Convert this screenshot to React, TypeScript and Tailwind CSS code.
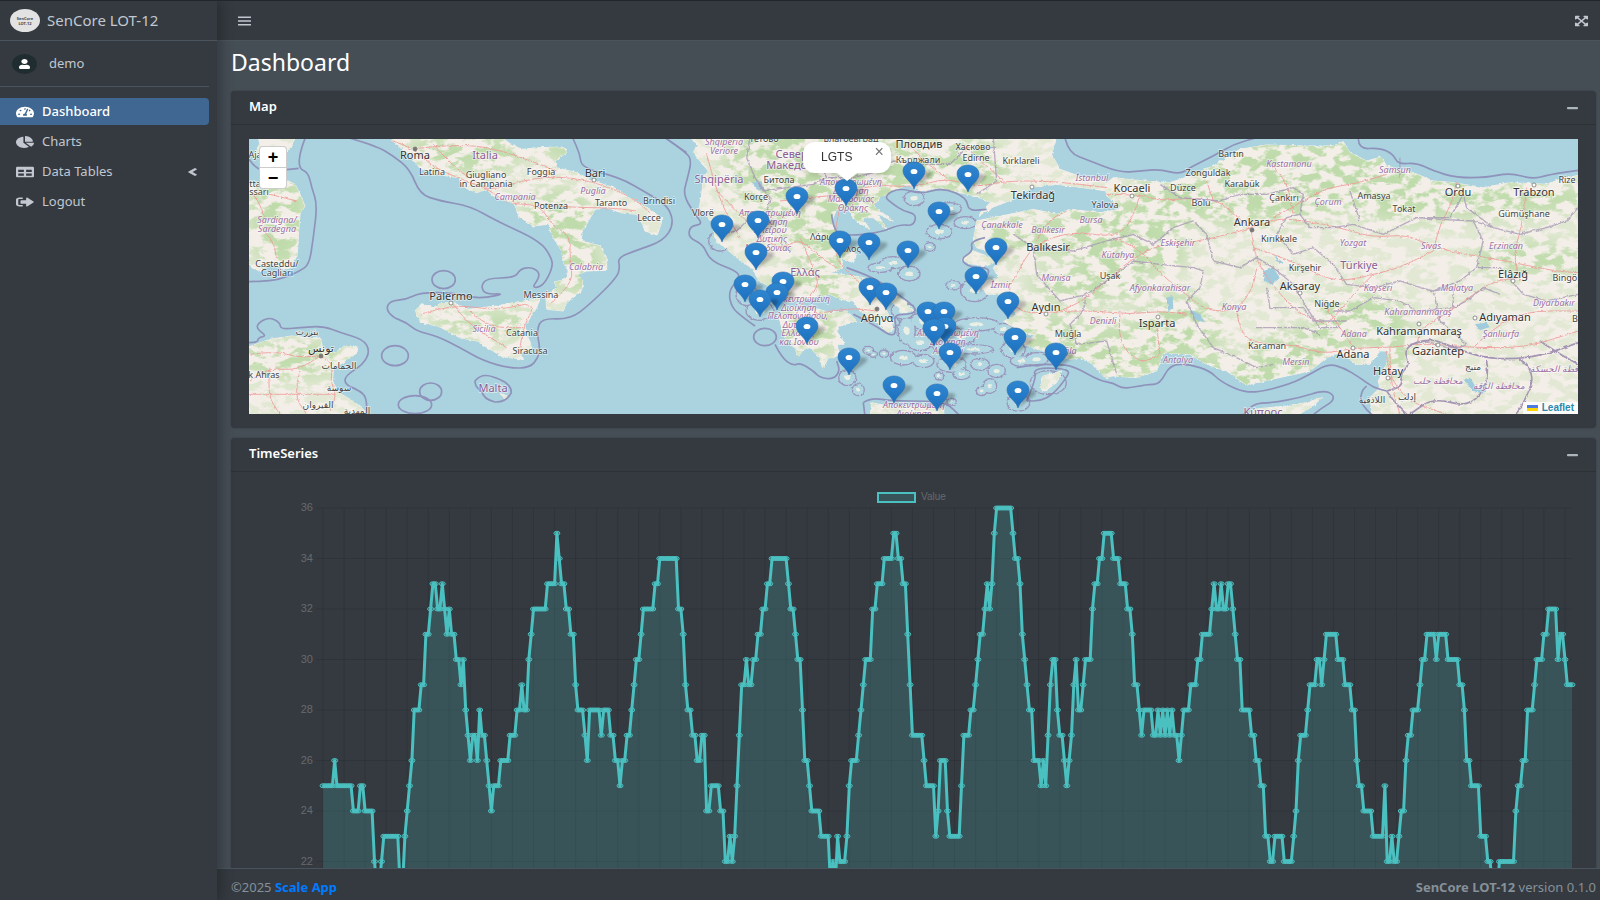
import { useState, type ReactNode } from "react";
import {
  FaBars,
  FaChartPie,
  FaChevronLeft,
  FaExpandArrowsAlt,
  FaMinus,
  FaSignOutAlt,
  FaTable,
  FaTachometerAlt,
  FaUser,
} from "react-icons/fa";

// [first sample, value], each value holds until the next entry
const RUNS: [number, number][] = [
  [0, 25], [5, 26], [6, 25], [13, 24], [16, 25], [18, 24], [22, 22], [23, 21], [25, 22], [26, 23],
  [33, 21], [35, 23], [36, 24], [37, 25], [38, 26], [39, 28], [42, 29], [44, 31], [46, 32], [47, 33],
  [49, 32], [51, 33], [52, 32], [53, 31], [54, 32], [55, 31], [57, 30], [59, 29], [60, 30], [61, 28],
  [62, 27], [63, 26], [64, 27], [66, 26], [67, 28], [68, 27], [70, 26], [71, 25], [72, 24], [73, 25],
  [76, 26], [80, 27], [83, 28], [85, 29], [86, 28], [88, 30], [89, 31], [90, 32], [96, 33], [100, 35],
  [101, 34], [102, 33], [104, 32], [106, 31], [108, 29], [109, 28], [112, 27], [113, 26], [114, 28],
  [119, 27], [120, 28], [123, 27], [125, 26], [127, 25], [128, 26], [130, 27], [132, 28], [133, 29],
  [134, 30], [136, 31], [137, 32], [142, 33], [144, 34], [152, 32], [154, 31], [155, 29], [156, 28],
  [158, 27], [160, 26], [162, 27], [164, 24], [166, 25], [170, 24], [172, 22], [174, 23], [175, 22],
  [176, 23], [177, 25], [178, 27], [179, 29], [181, 30], [182, 29], [184, 30], [186, 31], [188, 32],
  [190, 33], [192, 34], [199, 33], [200, 32], [202, 31], [203, 30], [205, 28], [206, 26], [208, 25],
  [209, 24], [213, 23], [217, 21], [218, 22], [219, 21], [220, 23], [221, 22], [224, 23], [225, 25],
  [226, 26], [229, 27], [230, 28], [231, 29], [232, 30], [235, 32], [237, 33], [240, 34], [244, 35],
  [246, 34], [248, 33], [250, 31], [251, 29], [252, 27], [257, 26], [258, 25], [262, 23], [263, 24],
  [264, 26], [267, 24], [268, 23], [273, 25], [274, 27], [277, 28], [279, 29], [280, 30], [281, 31],
  [283, 32], [284, 33], [285, 32], [286, 33], [287, 35], [288, 36], [295, 35], [296, 34], [298, 33],
  [299, 31], [300, 30], [301, 29], [302, 28], [304, 26], [307, 25], [308, 26], [309, 25], [310, 27],
  [311, 29], [312, 30], [314, 28], [315, 27], [317, 26], [318, 25], [319, 26], [320, 27], [321, 29],
  [322, 30], [323, 28], [325, 29], [326, 30], [329, 32], [330, 33], [332, 34], [334, 35], [338, 34],
  [341, 33], [344, 32], [346, 31], [347, 29], [349, 28], [350, 27], [351, 28], [355, 27], [357, 28],
  [358, 27], [359, 28], [360, 27], [361, 28], [362, 27], [363, 28], [364, 27], [366, 26], [367, 27],
  [368, 28], [371, 29], [374, 30], [376, 31], [380, 32], [381, 33], [382, 32], [384, 33], [385, 32],
  [387, 33], [389, 32], [390, 31], [391, 30], [393, 28], [397, 27], [399, 26], [401, 25], [403, 23],
  [405, 22], [407, 23], [411, 22], [415, 23], [416, 24], [417, 26], [418, 27], [421, 28], [422, 29],
  [425, 30], [427, 29], [428, 30], [429, 31], [434, 30], [437, 29], [440, 28], [442, 26], [443, 25],
  [445, 24], [449, 23], [454, 25], [455, 22], [457, 23], [458, 22], [460, 23], [461, 24], [463, 26],
  [464, 27], [466, 28], [469, 29], [470, 30], [472, 31], [476, 30], [477, 31], [481, 30], [486, 29],
  [488, 28], [489, 26], [491, 25], [495, 23], [498, 22], [500, 21], [503, 22], [510, 24], [511, 25],
  [513, 26], [515, 28], [518, 29], [519, 30], [522, 31], [524, 32], [528, 30], [529, 31], [531, 30],
  [532, 29],
];
const SAMPLES = 535;

const values = RUNS.flatMap(([start, value], i) =>
  Array<number>((RUNS[i + 1]?.[0] ?? SAMPLES) - start).fill(value)
);

// Marker tips on the map
const MARKERS: [number, number][] = [
  [665, 50], [719, 53], [597, 67], [548, 75], [690, 90], [509, 99], [473, 103], [591, 119],
  [620, 121], [747, 126], [659, 129], [507, 131], [727, 155], [534, 160], [496, 163], [621, 166],
  [637, 171], [528, 171], [511, 178], [759, 180], [679, 190], [695, 190], [696, 205], [558, 205],
  [685, 207], [766, 216], [807, 231], [701, 231], [600, 236], [645, 264], [769, 269], [688, 272],
];

type Label = [string, number, number];

const CITIES: Label[] = [
  ["Roma", 166, 17], ["Palermo", 202, 158], ["Bari", 346, 35], ["تونس", 72, 210],
  ["Tekirdağ", 784, 57], ["Kocaeli", 883, 50], ["Ankara", 1003, 84], ["Balıkesir", 799, 109],
  ["Aksaray", 1051, 148], ["Aydın", 797, 169], ["Αθήνα", 628, 180], ["Isparta", 908, 185],
  ["Ordu", 1209, 54], ["Trabzon", 1285, 54], ["Elâzığ", 1264, 136], ["Adıyaman", 1256, 179],
  ["Kahramanmaraş", 1170, 193], ["Gaziantep", 1189, 213], ["Adana", 1104, 216], ["Hatay", 1139, 233],
  ["Пловдив", 670, 6],
];

const TOWNS: Label[] = [
  ["Aja", 6, 16], ["tta", 6, 45], ["ssari", 10, 53], ["Latina", 183, 33], ["Giugliano", 237, 36],
  ["in Campania", 237, 45], ["Foggia", 292, 33], ["Potenza", 302, 67], ["Taranto", 362, 64],
  ["Brindisi", 410, 62], ["Lecce", 400, 79], ["Casteddu/", 28, 125], ["Cagliari", 28, 134],
  ["Messina", 292, 156], ["Catania", 273, 194], ["Siracusa", 281, 212], ["بنزرت", 58, 193],
  ["الحمامات", 90, 227], ["k Ahras", 15, 236], ["سوسة", 90, 249], ["القيروان", 69, 266],
  ["المهدية", 108, 272], ["Тетово", 515, 0], ["Битола", 530, 41], ["Korçe", 507, 58],
  ["Vlorë", 454, 74], ["Благоевград", 602, 0], ["Хасково", 724, 8], ["Кърджали", 669, 21],
  ["Edirne", 727, 19], ["Kırklareli", 772, 22], ["Λάρισα", 576, 98], ["Βόλος", 599, 110],
  ["Yalova", 856, 66], ["Uşak", 861, 137], ["Muğla", 819, 195], ["Bartın", 982, 15],
  ["Zonguldak", 959, 34], ["Karabük", 993, 45], ["Düzce", 934, 49], ["Bolu", 952, 64],
  ["Çankırı", 1035, 59], ["Amasya", 1125, 57], ["Tokat", 1155, 70], ["Rize", 1318, 41],
  ["Gümüşhane", 1275, 75], ["Kırıkkale", 1030, 100], ["Kırşehir", 1056, 129], ["Niğde", 1078, 165],
  ["Karaman", 1018, 207], ["Bingöl", 1317, 139], ["منبج", 1224, 228], ["إدلب", 1158, 258],
  ["اللاذقية", 1123, 261], ["B", 1326, 180],
];

const REGIONS: Label[] = [
  ["Sardigna/", 28, 81], ["Sardegna", 28, 90], ["Campania", 266, 58], ["Puglia", 344, 52],
  ["Calabria", 337, 128], ["Sicilia", 235, 190], ["Shqipëria", 475, 3], ["Veriore", 475, 12],
  ["Αποκεντρωμένη", 602, 43], ["Διοίκηση", 602, 52], ["Μακεδονίας", 602, 60], ["Θράκης", 604, 69],
  ["Αποκεντρωμένη", 521, 74], ["Διοίκηση", 521, 83], ["Ηπείρου", 521, 91], ["Δυτικής", 523, 100],
  ["Μακεδονίας", 519, 109], ["Αποκεντρωμένη", 550, 160], ["Διοίκηση", 550, 169],
  ["Πελοποννήσου,", 549, 177], ["Δυτικής", 549, 186], ["Ελλάδας", 549, 194],
  ["και Ιονίου", 550, 203], ["Αποκεντρωμένη", 699, 194], ["Διοίκηση", 699, 203],
  ["Αιγαίου", 699, 212], ["Αποκεντρωμένη", 665, 266], ["Διοίκηση", 665, 275],
  ["Çanakkale", 753, 86], ["Balıkesir", 799, 91], ["Bursa", 842, 81], ["İstanbul", 843, 39],
  ["Kütahya", 869, 116], ["Manisa", 807, 139], ["İzmir", 752, 146], ["Denizli", 854, 182],
  ["Muğla", 815, 212], ["Kastamonu", 1040, 25], ["Samsun", 1146, 31], ["Çorum", 1079, 63],
  ["Eskişehir", 929, 104], ["Yozgat", 1104, 104], ["Sivas", 1182, 107], ["Erzincan", 1257, 107],
  ["Afyonkarahisar", 911, 149], ["Kayseri", 1129, 149], ["Malatya", 1208, 149], ["Konya", 985, 168],
  ["Kahramanmaraş", 1169, 173], ["Diyarbakır", 1305, 164], ["Adana", 1105, 195],
  ["Şanlıurfa", 1252, 195], ["Mersin", 1047, 223], ["Antalya", 929, 221],
  ["محافظة حلب", 1189, 242], ["محافظة الرقة", 1250, 247], ["محافظة الحسكة", 1312, 230],
];

const COUNTRIES: Label[] = [
  ["Italia", 236, 17], ["Malta", 244, 250], ["Shqipëria", 470, 41], ["Северна", 549, 16],
  ["Македонија", 549, 27], ["Ελλάς", 556, 134], ["Türkiye", 1110, 127], ["Κύπρος", 1014, 274],
];

// Small islands with their coastal waters: x, y, rx, ry
const ISLANDS: [number, number, number, number][] = [
  [898, 452, 38, 22], [930, 383, 34, 18], [976, 425, 34, 18], [870, 498, 16, 13], [822, 352, 30, 22],
  [760, 545, 40, 18], [720, 560, 36, 14], [808, 578, 32, 22], [940, 613, 22, 14], [1004, 628, 42, 34],
  [790, 690, 36, 24], [850, 720, 38, 26], [905, 745, 40, 30], [800, 750, 26, 40], [840, 785, 36, 24],
  [915, 790, 40, 26], [965, 765, 44, 24], [790, 830, 38, 22], [850, 840, 32, 20], [935, 850, 44, 24],
  [1000, 805, 60, 14], [1010, 730, 66, 20], [1020, 850, 28, 18], [1070, 870, 26, 20],
  [1120, 805, 36, 26], [1145, 840, 34, 16], [1190, 835, 34, 20], [1025, 930, 16, 14],
  [1050, 915, 20, 22], [1135, 965, 34, 26], [965, 880, 26, 16], [897, 885, 14, 12],
  [685, 808, 16, 12], [732, 818, 14, 11], [700, 820, 12, 9], [622, 890, 26, 24], [655, 926, 18, 18],
  [360, 690, 42, 28], [320, 640, 32, 34], [240, 480, 34, 30], [935, 962, 14, 10],
  [1090, 745, 28, 18], [755, 725, 24, 14], [880, 975, 12, 10], [1225, 905, 54, 36],
];

// The west sheet covers Italy and Tunisia, the east sheet the Balkans and Anatolia
const WEST = "translate(-29 -58) scale(0.3333)";
const EAST = "translate(391 -58) scale(0.3333)";

const WEST_LAND =
  "M87 300L120 325L180 318L205 300L225 310L240 340L255 375L240 400L236 450L232 520L215 560L190 565L150 545L120 570L95 560L87 540Z" +
  "M120 165L228 165L212 200L200 215L140 197L118 215L100 232L116 195Z" +
  "M505 165L530 190L580 235L600 262L650 280L715 290L735 320L770 335L800 325L820 345L850 355L885 370L895 405L940 435L985 430L1000 470L1025 510L1030 545L1045 570L1040 595L1003 603L1010 620L990 635L978 650L980 685L1030 690L1040 665L1085 630L1088 600L1075 580L1100 570L1160 568L1160 530L1140 495L1090 482L1082 460L1100 430L1125 385L1160 378L1200 395L1250 400L1268 430L1275 450L1312 462L1328 415L1290 385L1240 355L1180 320L1120 300L1070 275L1010 260L1005 240L1040 215L1030 198L960 200L905 205L870 188L840 165Z" +
  "M585 690L605 668L640 680L665 665L700 665L745 685L830 675L880 665L960 652L950 680L915 735L925 770L935 800L905 815L910 835L850 828L810 805L770 780L720 770L660 738L600 722Z" +
  "M80 800L150 775L215 765L265 770L300 770L310 805L345 815L375 795L410 795L412 815L370 845L340 860L338 900L355 935L400 960L430 985L450 1010L80 1010Z" +
  "M842 938L862 946L856 956Z";

const EAST_LAND =
  "M145 165L172 190L160 215L180 240L205 270L190 290L185 340L178 380L190 395L215 420L225 470L255 500L290 530L340 565L355 600L400 620L400 640L460 660L520 650L570 640L600 655L640 660L660 690L700 715L745 755L760 745L745 700L725 660L690 610L660 590L640 585L570 575L610 560L600 530L640 545L650 520L620 495L590 460L575 420L590 385L620 380L650 420L690 445L665 410L700 410L745 450L710 398L760 420L700 375L720 350L760 330L800 312L850 330L900 320L960 335L1010 345L1050 365L1015 405L1060 378L1120 355L1180 318L1250 310L1330 320L1400 330L1395 295L1330 290L1260 265L1235 220L1250 165Z" +
  "M415 700L440 680L520 680L570 695L620 690L650 720L600 735L590 750L615 790L590 790L600 820L580 830L565 830L548 865L540 830L510 800L490 805L475 828L465 800L440 785L425 740Z" +
  "M650 585L700 600L760 640L800 665L820 690L790 690L740 650L680 620Z" +
  "M1010 420L1060 410L1110 400L1180 385L1250 400L1290 385L1380 395L1440 385L1420 360L1400 345L1395 310L1420 290L1510 300L1590 305L1650 285L1720 255L1800 205L1880 192L2000 195L2080 195L2110 182L2130 215L2180 240L2225 228L2240 255L2320 275L2380 300L2440 305L2530 320L2610 305L2720 310L2760 295L2830 280L2830 1010L2200 1010L2190 950L2220 920L2215 900L2240 850L2245 810L2220 810L2190 850L2150 850L2100 815L2060 830L2010 870L1940 885L1820 912L1760 870L1700 850L1650 820L1570 815L1550 870L1490 890L1420 885L1395 890L1360 850L1320 830L1290 835L1240 820L1180 800L1130 780L1190 765L1130 745L1090 720L1130 700L1100 660L1085 640L1040 640L1020 605L1075 590L1060 560L1075 545L1040 540L1075 520L1010 500L1000 480Z" +
  "M965 535L1000 510L1040 525L1070 540L1040 555L990 548Z" +
  "M690 1010L695 965L740 975L830 975L910 985L915 1010Z" +
  "M1200 920L1210 885L1265 870L1250 905L1215 930Z" +
  "M1820 1010L1840 985L1940 975L2000 965L2045 950L2020 975L1960 1010Z";

const WEST_WATERS =
  "M258 165L240 210L236 262L265 275L275 320L292 370L280 470L268 550L240 570L195 590L150 600L87 602M87 235L110 270L180 268L236 262" +
  "M385 170L470 195L520 225L570 265L600 340L660 360L750 375L830 420L960 480L995 530L998 560L970 615L935 622L958 590L955 570L930 558L900 565L885 590L800 592L783 615L795 640L855 638L800 650L755 650L700 635L600 635L560 655L510 660L498 685L520 710L560 725L590 750L650 765L720 800L790 840L870 862L930 860L955 830L960 800L950 750L965 712L1050 715L1110 670L1190 590L1200 560L1193 530L1250 508L1330 480L1362 430L1345 375L1280 335L1200 290L1085 260L1080 220L1058 170" +
  "M1335 170L1400 215" +
  "M87 785L112 785L115 770L140 765L112 745L112 728L147 708L180 725L182 745L240 740L310 735L360 755L430 775L450 810L430 850L375 885L375 910L420 930L440 950L440 1010";

const EAST_WATERS =
  "M75 170L140 215L155 240L140 300L130 340L160 395L190 430L150 435L145 470L190 490L210 540L290 570L300 590L265 630L275 680L310 710L345 735M405 790L425 830L460 855L480 845L520 870L540 890L580 895L600 870L590 840" +
  "M575 400L580 450L620 465L720 455L780 430L820 435L830 400L790 390L760 370L730 345L780 320L840 340L910 320L980 350L985 390L1040 385M1035 470L990 480L1000 510L960 535L990 560L1050 560L1040 590M640 700L700 730L760 770L770 740L760 700L820 700L830 680L760 630L700 590L620 560M670 965L690 950L760 960L860 960L920 965L960 1005M675 1005L670 965" +
  "M1275 170L1285 215L1350 240L1440 275L1500 270L1560 265L1620 280L1650 260L1720 225L1780 190L1850 170M2155 170L2155 205L2220 200L2260 220L2275 250L2330 245L2380 270L2450 290L2540 290L2610 275L2680 295L2730 280L2815 268" +
  "M1130 860L1190 850L1250 850L1300 855L1380 900L1420 905L1450 925L1520 910L1560 910L1590 850L1650 850L1710 870L1740 900L1800 930L1850 935L1950 910L2010 880L2065 848L2110 860L2160 890L2200 920L2240 930M2200 1005L2160 970L2165 930L2180 915" +
  "M1805 1010L1830 968L1900 965L1980 950L2050 928L2080 940L2080 960L2040 985L2010 1010M1160 960L1190 890L1180 870L1210 860L1290 865L1280 890L1240 940L1200 960L1160 960";

const BORDERS =
  "M330 170L320 230L345 290L370 330L440 320L520 310L560 290L640 290M345 290L390 350L380 400L330 410L290 450L240 460M640 290L720 270L760 240L850 250L930 250L980 200L1070 200M1060 170L1070 300L1010 340M560 170L540 250L560 290" +
  "M1120 460L1180 500L1300 510L1400 480L1480 460L1540 490L1600 440L1660 420L1700 460L1720 540L1800 560L1850 530L1900 560L1960 610L2000 680L2040 740L2100 740M1180 500L1190 580L1260 660L1340 640L1400 600L1480 540L1560 550L1660 560L1690 570L1680 620L1640 660L1670 730L1720 800L1790 830L1850 860L1900 850M1340 640L1330 690L1290 730L1310 790L1400 780L1430 880" +
  "M1560 310L1620 350L1740 360L1800 340L1880 340L1960 320L1990 340L1980 400L2010 440L2080 440L2140 430L2230 460L2330 410L2400 415L2500 420L2560 440L2640 460L2720 440L2780 420L2815 380M1980 400L1940 410L1910 460L1960 520L2020 500L2080 550L2120 610L2200 620L2280 600L2340 620L2380 630L2460 600L2510 560L2530 480L2500 420M2080 690L2130 690L2200 650L2280 660L2330 690L2440 680L2440 620L2380 630L2400 720L2480 790L2460 800M2280 230L2280 290M2130 330L2160 420M2330 410L2430 410L2470 340L2480 380L2560 440" +
  "M1880 620L1890 680L1990 680L2020 720L2120 720M1850 740L1990 740L2040 760M2510 560L2580 560L2650 640L2720 660L2815 640M2580 640L2530 620L2480 660L2440 680M2310 790L2360 780L2420 800L2460 800";

const STATE_BORDER =
  "M2240 930L2290 920L2280 880L2310 850L2290 800L2370 770L2440 800L2530 830L2620 835L2720 820L2815 785M2240 930L2260 960L2310 1010M2540 840L2550 900L2490 980L2380 950L2310 1000M2640 835L2690 870L2650 970L2620 1010M2700 780L2760 820L2815 850";

const EAST_ROADS =
  "M200 220L230 330L260 400L300 470M230 330L300 400L360 460L420 510L480 470L540 530L590 560M420 360L500 350L620 340L700 310L820 320L920 290L1010 320L1090 300L1240 300L1400 320" +
  "M600 380L580 460L590 540L640 590L700 640M480 470L520 560L540 620L470 680L460 760M520 700L620 680L710 690M640 170L650 240L620 340M800 180L850 240L920 290M980 200L1090 300" +
  "M1400 340L1500 340L1560 360L1650 350L1740 360L1780 400L1835 440L1840 500L1860 560L1920 640L1980 700L2060 730M1500 340L1480 420L1420 470L1300 450L1180 490L1130 580L1100 630L1140 700L1260 690L1380 690L1470 700L1560 690L1640 700M1420 470L1500 500L1560 580L1640 640L1700 690L1790 690L1840 620L1850 560" +
  "M1835 440L1700 480L1560 490L1480 530L1410 590L1330 660L1260 690M1835 440L1900 410L2000 420L2100 440L2200 470L2300 460L2380 500L2480 520L2600 540L2740 570L2815 575M1900 410L1990 360L2060 320L2140 310L2240 280M1840 500L1960 540L2050 590L2120 600L2200 580L2280 560L2380 510" +
  "M1790 690L1800 760L1860 790L1960 790L2050 820L2140 800L2250 800L2330 790L2390 790L2500 800L2660 800L2815 750M2060 730L2100 690L2140 640L2200 580M2140 800L2100 740L2060 680M2330 790L2340 740L2420 700L2500 640L2560 600L2640 590M2250 800L2250 900L2280 1000M1550 730L1560 820M2660 320L2650 420L2620 520L2640 600M2450 300L2440 360L2400 430L2380 510M1720 360L1700 300M1880 240L1940 290L1960 400M2240 810L2240 870L2300 960L2420 1000M2500 800L2560 740L2660 690L2815 690M1190 480L1220 420L1280 390M1440 700L1430 780L1500 850L1560 820";

const WEST_ROADS =
  "M520 180L585 203L640 260L740 300L810 330L900 300L1000 285L1120 300L1240 350L1290 395M585 203L700 190L820 200L960 250L1010 270M640 190L700 260L810 330L870 370L960 370L1000 440L1050 460L1050 540L1060 600L990 670M960 370L1060 380L1170 380L1250 390M600 700L700 668L830 690L950 660L910 740L900 800M750 690L800 740L910 740M700 668L730 720L860 800" +
  "M100 340L140 400L120 440L160 480L170 535M150 340L230 360M90 820L160 810L240 830L303 823L340 850L330 900L350 940L330 990M303 823L240 870L150 860L90 900M240 870L220 940L260 1000M150 860L140 940L180 1000M87 940L140 940L220 940L350 940";

const HEAVY_WOODS: [number, number, number, number][] = [
  [350, 8, 60, 18], [535, 30, 60, 50], [580, 70, 55, 60], [640, 30, 60, 30], [720, 30, 40, 30],
  [560, 150, 40, 25], [560, 195, 30, 25], [790, 95, 60, 22], [880, 80, 70, 20], [840, 145, 60, 18],
  [870, 215, 55, 30], [930, 190, 45, 35], [985, 240, 70, 22], [1050, 215, 45, 24], [1110, 180, 50, 28],
  [1000, 55, 120, 30], [1040, 15, 90, 18], [1140, 40, 80, 26], [1230, 60, 120, 18], [1280, 120, 60, 16],
  [1160, 65, 60, 18], [1148, 215, 14, 26], [880, 115, 60, 20], [310, 90, 40, 40], [325, 130, 30, 24],
  [215, 15, 60, 20], [30, 80, 30, 50], [40, 220, 60, 18], [240, 185, 60, 12], [800, 195, 40, 20],
];

// Rounds the corners of "M..L.." polylines with quadratic curves through the midpoints
function smooth(d: string) {
  return d
    .split("M")
    .filter(Boolean)
    .map((part) => {
      const pts = part.split("L").map((p) => p.split(" ").map(Number));
      const last = pts[pts.length - 1];
      let out = `M${pts[0][0]} ${pts[0][1]}`;
      for (let i = 1; i < pts.length - 1; i++) {
        const [x, y] = pts[i];
        const [nx, ny] = pts[i + 1];
        out += `Q${x} ${y} ${(x + nx) / 2} ${(y + ny) / 2}`;
      }
      return `${out}L${last[0]} ${last[1]}`;
    })
    .join("");
}

function LabelSet({ labels, className }: { labels: Label[]; className: string }) {
  return (
    <g className={className} textAnchor="middle">
      {labels.map(([text, x, y], i) => (
        <text key={i} x={x} y={y + 3}>
          {text}
        </text>
      ))}
    </g>
  );
}

function Marker({ x, y }: { x: number; y: number }) {
  return (
    <g transform={`translate(${x} ${y})`}>
      <path d="M0 0L16 -12Q22 -18 12 -18Q6 -18 0 0" fill="#000" opacity="0.25" filter="url(#soft)" />
      <path
        d="M0 0C-2 -7 -11 -11 -11 -18C-11 -23.500 -6 -27 0 -27S11 -23.500 11 -18C11 -11 2 -7 0 0Z"
        fill="url(#pin)"
        stroke="#2c6fae"
        strokeWidth="0.6"
      />
      <ellipse cx="0" cy="-17.500" rx="3.400" ry="2.600" fill="#fff" />
    </g>
  );
}

function StationMap() {
  const [popupOpen, setPopupOpen] = useState(true);

  return (
    <div className="relative h-[275px] w-full overflow-hidden bg-[#aad3df]">
      <svg viewBox="0 0 1329 275" preserveAspectRatio="xMidYMid slice" className="block h-full w-full" role="img" aria-label="Station map">
        <defs>
          <linearGradient id="pin" x1="0" y1="0" x2="0" y2="1">
            <stop offset="0" stopColor="#2f86cf" />
            <stop offset="1" stopColor="#1c70c0" />
          </linearGradient>
          <filter id="soft" x="-50%" y="-50%" width="200%" height="200%">
            <feGaussianBlur stdDeviation="1.5" />
          </filter>
          <filter id="halo" x="-50%" y="-50%" width="200%" height="200%">
            <feGaussianBlur stdDeviation="9" />
          </filter>
          {/* Roughens coasts, borders and roads */}
          <filter id="rough" filterUnits="userSpaceOnUse" x="0" y="0" width="4300" height="1100">
            <feTurbulence type="fractalNoise" baseFrequency="0.09" numOctaves="3" seed="4" />
            <feDisplacementMap in="SourceGraphic" scale="9" xChannelSelector="R" yChannelSelector="G" />
          </filter>
          <filter id="woods" filterUnits="userSpaceOnUse" x="0" y="0" width="1329" height="275" colorInterpolationFilters="sRGB">
            <feTurbulence type="fractalNoise" baseFrequency="0.07 0.11" numOctaves="4" seed="11" />
            <feColorMatrix values="0 0 0 0 0.75  0 0 0 0 0.86  0 0 0 0 0.67  7 0 0 0 -3.1" />
          </filter>
          <clipPath id="land">
            <path d={WEST_LAND} transform={WEST} />
            <path d={EAST_LAND} transform={EAST} />
          </clipPath>
          <mask id="wooded">
            <rect width="1329" height="275" fill="#555" />
            <g filter="url(#halo)" fill="#fff">
              {HEAVY_WOODS.map(([x, y, rx, ry], i) => (
                <ellipse key={i} cx={x} cy={y} rx={rx} ry={ry} />
              ))}
            </g>
          </mask>
        </defs>

        {/* Coastal waters of the islands, merged into one outline */}
        <g transform={EAST} filter="url(#rough)">
          <g fill="#9a95bb">
            {ISLANDS.map(([x, y, rx, ry], i) => (
              <ellipse key={i} cx={x} cy={y} rx={rx + 2} ry={ry + 2} />
            ))}
          </g>
          <g fill="#b0d6e1">
            {ISLANDS.map(([x, y, rx, ry], i) => (
              <ellipse key={i} cx={x} cy={y} rx={rx - 2} ry={ry - 2} />
            ))}
          </g>
          <g fill="#e9efe4">
            {ISLANDS.map(([x, y, rx, ry], i) => (
              <ellipse key={i} cx={x} cy={y} rx={rx * 0.35} ry={ry * 0.3} />
            ))}
          </g>
        </g>

        <g fill="#f3efe8" stroke="#f3efe8" strokeWidth="3" filter="url(#rough)" transform={WEST}>
          <path d={WEST_LAND} />
        </g>
        <g fill="#f3efe8" stroke="#f3efe8" strokeWidth="3" filter="url(#rough)" transform={EAST}>
          <path d={EAST_LAND} />
        </g>
        <g clipPath="url(#land)">
          <g mask="url(#wooded)">
            <rect width="1329" height="275" filter="url(#woods)" />
          </g>
        </g>

        {/* Lakes */}
        <g transform={EAST} fill="#9fcbdc" filter="url(#rough)">
          <path d="M1870 570L1900 560L1920 590L1895 612L1875 600Z" />
          <path d="M1650 685L1680 700L1695 725L1665 715ZM1580 650L1598 645L1600 680L1585 690Z" />
          <path d="M2470 895L2490 890L2510 920L2540 925L2530 938L2500 930ZM2505 730L2540 725L2550 738L2520 748Z" />
          <path d="M335 305L365 300L370 330L350 325ZM1900 520L1930 545L1920 550Z" />
        </g>

        {/* Roads */}
        <g fill="none" stroke="#f09a9a" strokeWidth="3" strokeOpacity="0.85">
          <path d={smooth(WEST_ROADS)} transform={WEST} filter="url(#rough)" />
          <path d={smooth(EAST_ROADS)} transform={EAST} filter="url(#rough)" />
        </g>

        {/* Borders and territorial waters */}
        <g fill="none" stroke="#a595b4" strokeLinejoin="round">
          <path d={BORDERS} transform={EAST} filter="url(#rough)" strokeWidth="4" strokeOpacity="0.75" />
          <path d={smooth(STATE_BORDER)} transform={EAST} filter="url(#rough)" strokeWidth="5" />
          <path d={smooth(EAST_WATERS)} transform={EAST} strokeWidth="5" stroke="#8f92ba" />
          <g transform={WEST} strokeWidth="5" stroke="#8f92ba">
            <path d={smooth(WEST_WATERS)} />
            <ellipse cx="671" cy="596" rx="35" ry="27" />
            <ellipse cx="525" cy="824" rx="40" ry="30" />
            <ellipse cx="632" cy="932" rx="33" ry="26" />
            <ellipse cx="585" cy="971" rx="50" ry="27" />
            <path d="M765 900Q785 875 820 888Q875 905 874 935Q860 965 825 963Q790 955 785 930Q765 920 765 900Z" />
          </g>
          <ellipse cx="375" cy="768" rx="34" ry="26" transform={EAST} strokeWidth="5" stroke="#8f92ba" />
        </g>

        {/* City dots */}
        <g fill="#fff" stroke="#777" strokeWidth="0.8">
          <circle cx="202" cy="164" r="2" />
          <circle cx="345" cy="41" r="2" />
          <circle cx="783" cy="48" r="2" />
          <circle cx="883" cy="57" r="2" />
          <circle cx="1209" cy="47" r="2" />
          <circle cx="1285" cy="46" r="2" />
          <circle cx="909" cy="178" r="2" />
          <circle cx="797" cy="175" r="2" />
          <circle cx="1051" cy="154" r="2" />
          <circle cx="1264" cy="142" r="2" />
          <circle cx="1226" cy="179" r="2" />
          <circle cx="1170" cy="185" r="2" />
          <circle cx="1189" cy="206" r="2" />
          <circle cx="1104" cy="209" r="2" />
          <circle cx="1139" cy="239" r="2" />
          <g fill="#777">
            <circle cx="166" cy="10" r="2" />
            <circle cx="1003" cy="91" r="2" />
            <circle cx="628" cy="170" r="2" />
            <circle cx="72" cy="217" r="2" />
          </g>
        </g>

        <g className="font-['Noto_Sans','DejaVu_Sans',sans-serif] [paint-order:stroke]" stroke="#ffffff" strokeOpacity="0.6" strokeWidth="1.5">
          <LabelSet labels={REGIONS} className="fill-[#9a6fa5] text-[9px] italic" />
          <LabelSet labels={TOWNS} className="fill-[#444444] text-[9px]" />
          <LabelSet labels={COUNTRIES} className="fill-[#8a5c96] text-[11px]" />
          <LabelSet labels={CITIES} className="fill-[#333333] text-[11px]" />
        </g>

        {MARKERS.map(([x, y]) => (
          <Marker key={`${x}-${y}`} x={x} y={y} />
        ))}
      </svg>

      {/* Zoom control */}
      <div className="absolute left-[10px] top-[7px] flex w-7 flex-col overflow-hidden rounded-sm border border-black/20 bg-white font-['Liberation_Sans',sans-serif] text-lg font-bold leading-5 text-black">
        <button type="button" aria-label="Zoom in" className="h-[21px] border-b border-[#cccccc]">
          +
        </button>
        <button type="button" aria-label="Zoom out" className="h-5">
          −
        </button>
      </div>

      {popupOpen && (
        <div className="absolute left-[45%] top-[3px] w-[88px] -translate-x-1/2 font-['Liberation_Sans',sans-serif] drop-shadow-md">
          <div className="relative flex h-[31px] items-center rounded-xl bg-white pb-0.5 pl-[18px] text-xs text-[#333333]">
            LGTS
            <button
              type="button"
              aria-label="Close popup"
              onClick={() => setPopupOpen(false)}
              className="absolute right-1 top-0.5 h-4 w-4 text-base leading-4 text-[#757575]"
            >
              ×
            </button>
          </div>
          <div className="mx-auto h-2 w-5 bg-white [clip-path:polygon(0_0,100%_0,50%_100%)]" />
        </div>
      )}

      <div className="absolute bottom-0 right-0 flex items-center gap-1 bg-white/80 px-1 font-['Liberation_Sans',sans-serif] text-[10px] leading-3">
        <svg viewBox="0 0 12 8" preserveAspectRatio="none" className="h-[6px] w-[11px]" aria-hidden="true">
          <path fill="#4c7be1" d="M0 0h12v4H0z" />
          <path fill="#ffd500" d="M0 4h12v4H0z" />
        </svg>
        <a href="#leaflet" className="font-bold text-[#2a88ad]">
          Leaflet
        </a>
      </div>
    </div>
  );
}

const PLOT_LEFT = 74;
const PLOT_WIDTH = 1249;
const PLOT_TOP = 22;
const PLOT_BOTTOM = 426;

const sampleX = (i: number) => PLOT_LEFT + (i * PLOT_WIDTH) / (SAMPLES - 1);
const valueY = (v: number) => PLOT_TOP + ((36 - v) * (PLOT_BOTTOM - PLOT_TOP)) / 16;

function TimeSeriesChart() {
  const points = values.map((v, i) => `${sampleX(i).toFixed(1)},${valueY(v).toFixed(1)}`);
  const line = `M${points.join("L")}`;
  const area = `${line}L${PLOT_LEFT + PLOT_WIDTH},${PLOT_BOTTOM}L${PLOT_LEFT},${PLOT_BOTTOM}Z`;
  const rows = [36, 34, 32, 30, 28, 26, 24, 22, 20];
  const columns = Array.from({ length: 60 }, (_, i) => i * 9);

  return (
    <svg viewBox="0 0 1329 450" className="block w-full font-['Liberation_Sans',sans-serif]" role="img" aria-label="Value over time">
      <g stroke="#000" strokeOpacity="0.1">
        {rows.map((v) => (
          <line key={v} x1={PLOT_LEFT - 7} x2={PLOT_LEFT + PLOT_WIDTH} y1={valueY(v)} y2={valueY(v)} />
        ))}
        {columns.map((i) => (
          <line key={i} x1={sampleX(i)} x2={sampleX(i)} y1={PLOT_TOP} y2={PLOT_BOTTOM + 5} />
        ))}
      </g>
      <g className="fill-[#666a6e] text-[11px]" textAnchor="end">
        {rows.map((v) => (
          <text key={v} x={PLOT_LEFT - 10} y={valueY(v) + 3}>
            {v}
          </text>
        ))}
      </g>

      <path d={area} fill="#4bc0c0" fillOpacity="0.2" />
      <path d={line} fill="none" stroke="#4bc0c0" strokeWidth="3" strokeLinejoin="round" />
      <g fill="#4bc0c0" fillOpacity="0.3" stroke="#4bc0c0" strokeWidth="1">
        {values.map((v, i) => (
          <ellipse key={i} cx={sampleX(i)} cy={valueY(v)} rx="3" ry="2" />
        ))}
      </g>

      {/* Legend */}
      <rect x="629" y="7" width="37" height="9" fill="#4bc0c0" fillOpacity="0.2" stroke="#4bc0c0" strokeWidth="2" />
      <text x="672" y="14" className="fill-[#666a6e] text-[10px]">
        Value
      </text>
    </svg>
  );
}

function Card({ title, children }: { title: string; children: ReactNode }) {
  const [isOpen, setIsOpen] = useState(true);

  return (
    <section className="rounded bg-[#343a40] shadow-[0_0_2px_rgba(0,0,0,0.25)]">
      <div className="flex h-[34px] items-center justify-between border-b border-black/15 px-[18px]">
        <h2 className="pb-0.5 text-[13px] font-semibold text-white">{title}</h2>
        <button type="button" aria-label={`Collapse ${title}`} onClick={() => setIsOpen(!isOpen)} className="text-[#adb5bd]">
          <FaMinus preserveAspectRatio="none" className="h-3 w-[11px]" />
        </button>
      </div>
      {isOpen && <div className="px-[18px] py-[14px]">{children}</div>}
    </section>
  );
}

const MENU = [
  { name: "Dashboard", icon: FaTachometerAlt },
  { name: "Charts", icon: FaChartPie },
  { name: "Data Tables", icon: FaTable, nested: true },
  { name: "Logout", icon: FaSignOutAlt },
];

function Sidebar() {
  return (
    <aside className="z-10 w-[217px] shrink-0 bg-[#343a40] text-[#c2c7d0] shadow-[4px_0_12px_rgba(0,0,0,0.25)]">
      {/* Brand */}
      <a href="#home" className="flex h-10 items-center gap-[7px] border-b border-[#4b545c] pl-[10px]">
        <span className="flex h-[23px] w-[30px] flex-col items-center justify-center rounded-[50%] bg-[#e2e2e2] text-[4px] font-bold leading-[5px] text-[#444444]">
          <span>SenCore</span>
          <span>LOT-12</span>
        </span>
        <span className="text-[15px]">SenCore LOT-12</span>
      </a>

      {/* User */}
      <div className="mr-2 flex h-[46px] items-center gap-3 border-b border-[#4b545c] pl-3">
        <span className="flex h-5 w-[25px] items-center justify-center rounded-[50%] bg-[#1f2d31] text-white">
          <FaUser preserveAspectRatio="none" className="h-[10px] w-[11px]" />
        </span>
        <a href="#profile" className="text-[13px]">
          demo
        </a>
      </div>

      {/* Menu */}
      <nav className="mr-2 mt-[11px] flex flex-col gap-[3px]">
        {MENU.map(({ name, icon: Icon, nested }) => (
          <a
            key={name}
            href={`#${name}`}
            className={`flex h-[27px] items-center gap-2 rounded-r-sm pl-4 pr-3 text-[13px] ${
              name === "Dashboard" ? "bg-[#3f6791] font-medium text-white" : "text-[#c2c7d0]"
            }`}
          >
            <Icon preserveAspectRatio="none" className="h-3 w-[18px]" />
            <span className="flex-1">{name}</span>
            {nested && <FaChevronLeft preserveAspectRatio="none" className="h-2 w-[9px]" stroke="currentColor" strokeWidth="40" />}
          </a>
        ))}
      </nav>
    </aside>
  );
}

export default function App() {
  const [isSidebarOpen, setIsSidebarOpen] = useState(true);

  return (
    <div className="flex h-screen overflow-hidden border-t border-[#22252a] bg-[#454d55] font-['Noto_Sans',sans-serif]">
      {isSidebarOpen && <Sidebar />}

      <div className="flex min-w-0 flex-1 flex-col">
        {/* Top bar */}
        <header className="flex h-10 shrink-0 items-center justify-between border-b border-[#4b545c] bg-[#343a40] pl-[21px] pr-3 text-[#c2c7d0]">
          <button type="button" aria-label="Toggle menu" onClick={() => setIsSidebarOpen(!isSidebarOpen)}>
            <FaBars preserveAspectRatio="none" className="h-3 w-[13px]" />
          </button>
          <button type="button" aria-label="Fullscreen">
            <FaExpandArrowsAlt preserveAspectRatio="none" className="h-3 w-[13px]" />
          </button>
        </header>

        <main className="min-h-0 flex-1 overflow-y-auto pl-[14px] pr-1 [scrollbar-width:none]">
          <h1 className="flex h-[50px] items-center pb-2 text-[23px] text-white">Dashboard</h1>
          <div className="flex flex-col gap-[10px]">
            <Card title="Map">
              <StationMap />
            </Card>
            <Card title="TimeSeries">
              <TimeSeriesChart />
            </Card>
          </div>
        </main>

        {/* Footer */}
        <footer className="flex h-8 shrink-0 items-center justify-between border-t border-[#4b545c] bg-[#343a40] pl-[14px] pr-1 pt-1.5 text-[13px] text-[#869099]">
          <span>
            ©2025{" "}
            <a href="#scale" className="font-bold text-[#007bff]">
              Scale App
            </a>
          </span>
          <span>
            <b className="font-bold">SenCore LOT-12</b> version 0.1.0
          </span>
        </footer>
      </div>
    </div>
  );
}
